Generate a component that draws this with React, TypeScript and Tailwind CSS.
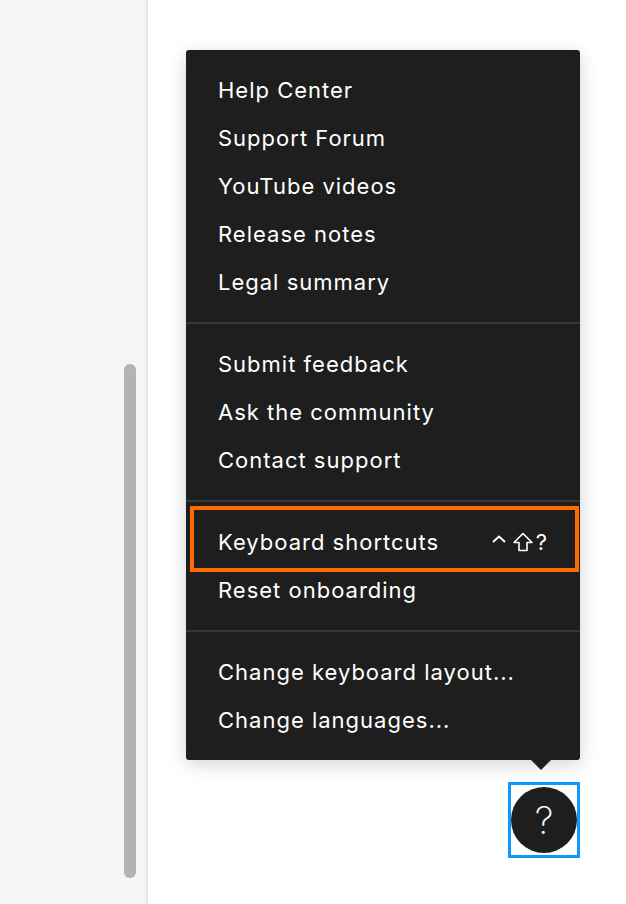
import type { FC } from "react";

const groups: string[][] = [
  ["Help Center", "Support Forum", "YouTube videos", "Release notes", "Legal summary"],
  ["Submit feedback", "Ask the community", "Contact support"],
  ["Keyboard shortcuts", "Reset onboarding"],
  ["Change keyboard layout...", "Change languages..."],
];

const MenuItem: FC<{ label: string }> = ({ label }) => {
  const isShortcuts = label === "Keyboard shortcuts";
  return (
    <div className="relative flex h-12 items-center justify-between px-8 text-[22px] tracking-[1px] text-white">
      <span>{label}</span>
      {isShortcuts && (
        <>
          <span className="flex items-center text-[22px]">
            <svg width="16" height="20" viewBox="0 0 16 20" fill="none" stroke="white" strokeWidth="2">
              <path d="M2 8 L8 2.5 L14 8" transform="translate(0 2)" />
            </svg>
            <svg width="22" height="20" viewBox="0 0 22 20" fill="none" stroke="white" strokeWidth="1.6" strokeLinejoin="round" className="ml-[5px]">
              <path d="M11 1.5 L20 10.5 H15 V18.5 H7 V10.5 H2 Z" />
            </svg>
            <span className="ml-[2px]">?</span>
          </span>
          <div className="pointer-events-none absolute left-[4px] right-[1px] top-[-12px] bottom-[-6px] border-[4px] border-[#ff6b00]" />
        </>
      )}
    </div>
  );
};

export default function App() {
  return (
    <div
      className="flex h-[904px] w-[626px] overflow-hidden bg-white"
      style={{ fontFamily: "Inter, 'Noto Sans', sans-serif" }}
    >
      {/* Left panel with scrollbar */}
      <div className="relative h-full w-[148px] shrink-0 border-r-2 border-[#e6e6e6] bg-[#f5f5f5]">
        <div className="absolute left-[124px] top-[364px] h-[514px] w-[12px] rounded-full bg-[#b3b3b3]" />
      </div>

      {/* Canvas area */}
      <div className="relative flex-1">
        {/* Help menu */}
        <div className="absolute left-[38px] top-[50px] w-[394px] rounded-[3px] bg-[#1e1e1e] py-4 shadow-[0_4px_18px_rgba(0,0,0,0.18)]">
          {groups.map((group, i) => (
            <div key={i}>
              {i > 0 && <div className="my-4 h-[2px] bg-[#383838]" />}
              {group.map((label) => (
                <MenuItem key={label} label={label} />
              ))}
            </div>
          ))}
          <div className="absolute bottom-[-10px] left-[345px] h-0 w-0 border-x-[10px] border-t-[10px] border-x-transparent border-t-[#1e1e1e]" />
        </div>

        {/* Help button */}
        <div className="absolute left-[360px] top-[782px] flex h-[76px] w-[72px] items-center justify-center border-[3px] border-[#0d99ff]">
          <div className="flex h-[66px] w-[66px] items-center justify-center rounded-full bg-[#1e1e1e] text-[38px] font-extralight text-white">
            ?
          </div>
        </div>
      </div>
    </div>
  );
}
